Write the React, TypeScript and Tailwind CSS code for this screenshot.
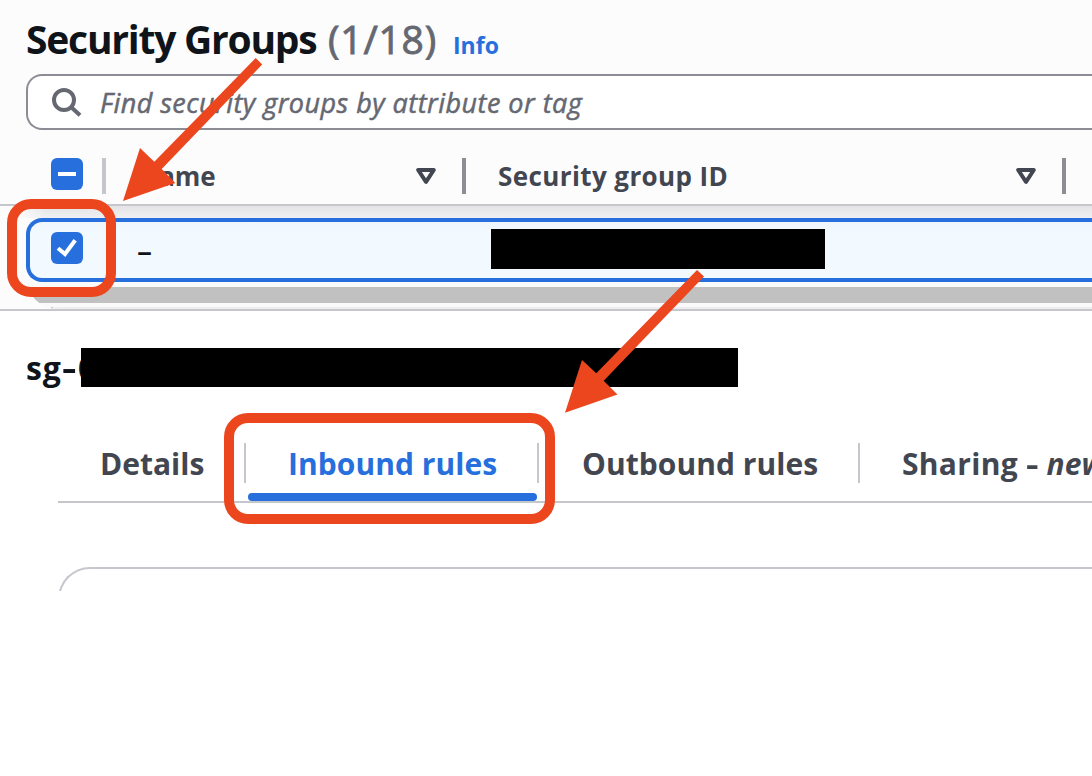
import React from "react";

function SortIcon() {
  return (
    <svg className="h-4 w-5 shrink-0" viewBox="0 0 20 16" fill="none">
      <path d="M2.2 2H17.8L10 13.8Z" stroke="#424650" strokeWidth="4" strokeLinejoin="round" />
    </svg>
  );
}

function Checkbox({ mixed = false }: { mixed?: boolean }) {
  return (
    <span className="flex size-8 shrink-0 items-center justify-center rounded-[6px] bg-[#276fdc]">
      <svg className="size-8" viewBox="0 0 32 32" fill="none" stroke="white" strokeWidth="4">
        {mixed ? <path d="M7 16H25" /> : <path d="M7 16.2L14 22L24.2 8.2" />}
      </svg>
    </span>
  );
}

function TableHeader() {
  return (
    <div className="flex h-[76px] items-start border-b-2 border-[#c6c6cd] pl-[51px] pt-7">
      <Checkbox mixed />
      <span className="ml-[19px] h-9 w-1 shrink-0 bg-[#c6c6cd]" />
      <span className="ml-8 flex w-[298px] shrink-0 items-center justify-between pt-[10px]">
        <span className="text-[26px] leading-4 font-bold text-[#424650]">Name</span>
        <SortIcon />
      </span>
      <span className="ml-[26px] h-9 w-1 shrink-0 bg-[#8c8c94]" />
      <span className="ml-8 flex w-[538px] shrink-0 items-center justify-between pt-[10px]">
        <span className="text-[26px] leading-4 font-bold tracking-[0.4px] text-[#424650]">Security group ID</span>
        <SortIcon />
      </span>
      <span className="ml-[26px] h-9 w-1 shrink-0 bg-[#8c8c94]" />
    </div>
  );
}

function Divider() {
  return <span className="h-10 w-[2px] shrink-0 bg-[#c6c6cd]" />;
}

export default function App() {
  return (
    <div className="relative h-[776px] w-[1092px] overflow-hidden bg-white font-['Open_Sans',sans-serif]">
      <section className="h-[311px] border-b-2 border-[#c6c6cd] bg-[#fcfcfd]">
        <header className="flex h-[74px] items-baseline whitespace-nowrap pl-[26px] pt-[10px]">
          <h1 className="w-[302px] text-[39px] leading-[54px] font-bold tracking-[-1.23px] text-[#0f141a]">Security Groups</h1>
          <span className="w-[125px] text-[39px] tracking-[0.8px] text-[#656871] [-webkit-text-stroke:0.9px_#656871]">(1/18)</span>
          <a className="text-[23px] font-bold text-[#276fdc]">Info</a>
        </header>
        <div className="ml-[26px] flex h-14 items-center rounded-l-[16px] border-2 border-r-0 border-[#8c8c94] bg-white pl-6">
          <svg className="size-8" viewBox="0 0 32 32" fill="none" stroke="#656871" strokeWidth="4">
            <circle cx="12" cy="14" r="10" />
            <path d="M19 21L28 29.3" />
          </svg>
          <span className="ml-4 whitespace-nowrap pt-[2px] text-[27px] tracking-[0.47px] text-[#656871] italic [-webkit-text-stroke:0.5px_#656871]">Find security groups by attribute or tag</span>
        </div>
        <TableHeader />
        <div className="ml-[17px] h-3 bg-linear-to-b from-[#e4e4e7] to-[#f0f0f2] [mask-image:linear-gradient(to_right,transparent,black_28px)]" />
        <div className="ml-[26px] h-[91px] overflow-hidden rounded-bl-[32px]">
          <div className="flex h-16 items-start rounded-l-[16px] border-4 border-r-0 border-[#276fdc] bg-linear-to-b from-[#eff6fd] to-[#f2faff] to-20% pl-[21px]">
            <div className="mt-[10px]"><Checkbox /></div>
            <span className="ml-[54px] w-[354px] pt-[9px] text-[30px] leading-[40px] font-semibold text-[#0f141a]">–</span>
            <span className="mt-[7px] h-10 w-[334px] bg-black" />
          </div>
          <div className="h-[27px] overflow-hidden bg-[#fafafa] pt-[5px]">
            <div className="h-4 bg-[#c1c1c1]" />
            <div className="ml-[25px] mt-1 h-[2px] border-l-2 border-[#c6c6cd] bg-[#eeeeee]" />
          </div>
        </div>
      </section>

      <section>
        <div className="flex h-[76px] items-start pt-[37px]">
          <h2 className="flex w-[81px] shrink-0 whitespace-nowrap pl-[26px] text-[32px] leading-[40px] font-bold text-[#0f141a]">
            <span className="tracking-[0.8px]">sg</span>
            <span className="mr-[6px] origin-left scale-x-140">-</span>
            <span>0</span>
          </h2>
          <span className="relative h-[39px] w-[657px] bg-black" />
        </div>
        <nav className="ml-[58px] mt-14 flex h-[60px] items-start whitespace-nowrap border-b-2 border-[#c6c6cd] text-[30px] leading-[42px] font-bold text-[#424650]">
          <span className="w-[186px] shrink-0 pl-[42px]">Details</span>
          <Divider />
          <span className="relative flex h-[58px] w-[291px] shrink-0 pl-[42px] tracking-[0.05px] text-[#276fdc]">
            Inbound rules
            <span className="absolute bottom-0 left-[2px] h-2 w-[289px] rounded-full bg-[#276fdc]" />
          </span>
          <Divider />
          <span className="w-[319px] shrink-0 pl-[43px] tracking-[0.05px]">Outbound rules</span>
          <Divider />
          <span className="flex pl-[42px]">
            <span className="tracking-[0.3px]">Sharing</span>
            <span className="ml-[8px] origin-left scale-x-130">-</span>
            <i className="ml-[11px]">new</i>
          </span>
        </nav>
        <div className="ml-[58px] mt-16 h-6 overflow-hidden">
          <div className="h-20 rounded-tl-[32px] border-l-2 border-t-2 border-[#c6c6cd]" />
        </div>
      </section>

      <div className="absolute left-[7px] top-[199px] h-[98px] w-[109px] rounded-[24px] border-10 border-[#ec461e]" />
      <div className="absolute left-[224px] top-[413px] h-[111px] w-[331px] rounded-[24px] border-10 border-[#ec461e]" />
      <svg className="absolute inset-0 h-full w-full" viewBox="0 0 1092 776" fill="#ec461e">
        <path d="M255.7 58L262.2 64.5L161.7 169L175.3 183L123 201L140 148L154.3 161.7Z" />
        <path d="M697 270L704 276.5L603.7 380.7L617.5 394.5L565 412.7L582 360L596.3 373.3Z" />
      </svg>
    </div>
  );
}
